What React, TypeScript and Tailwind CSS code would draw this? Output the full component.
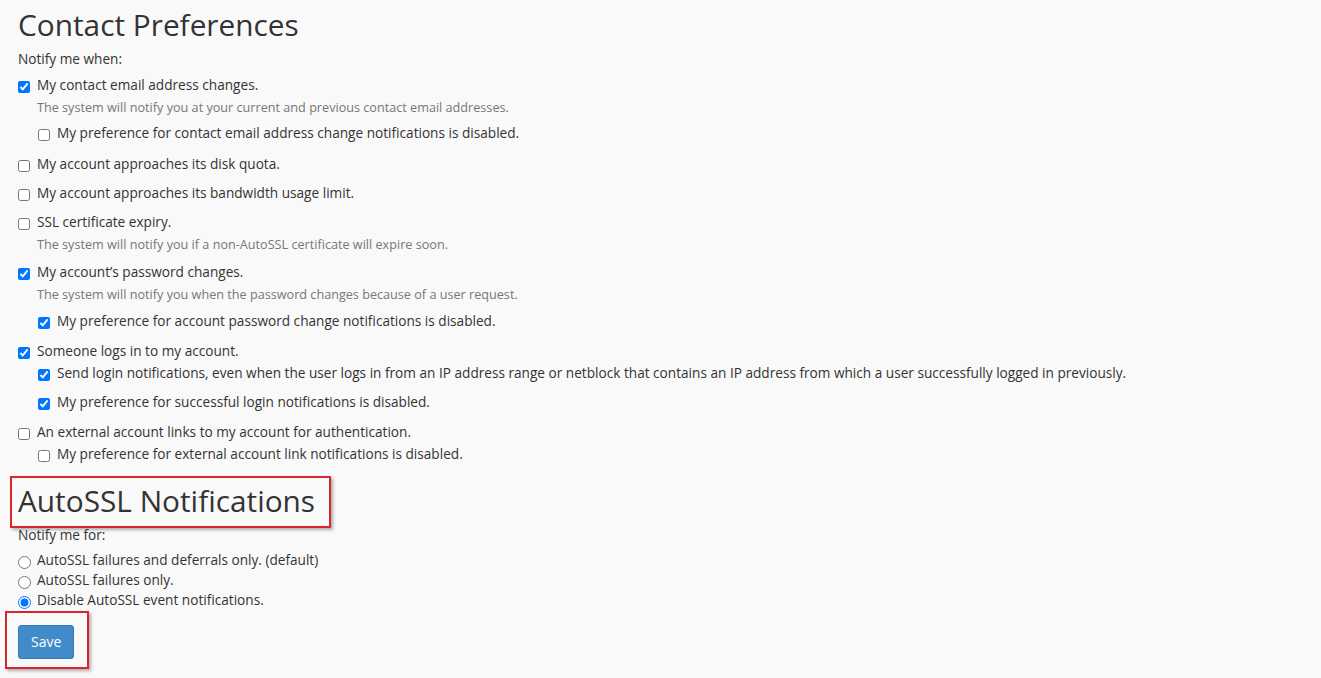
import type { ReactNode } from "react"

function Check({ checked, nested, className = "", children }: { checked?: boolean; nested?: boolean; className?: string; children: ReactNode }) {
  return (
    <label className={`flex items-start h-[20px] leading-[20px] ${nested ? "pl-[20px]" : ""} ${className}`}>
      <input
        type="checkbox"
        defaultChecked={checked}
        className="m-0 mt-[6px] mr-[7px] h-[12px] w-[12px] shrink-0"
      />
      <span className="whitespace-nowrap">{children}</span>
    </label>
  )
}

function Help({ className = "", children }: { className?: string; children: ReactNode }) {
  return <p className={`pl-[19px] text-[12.65px] leading-[20px] text-[#777] ${className}`}>{children}</p>
}

function Radio({ checked, children }: { checked?: boolean; children: ReactNode }) {
  return (
    <label className="flex items-start h-[20px] leading-[20px]">
      <input
        type="radio"
        name="autossl"
        defaultChecked={checked}
        className="m-0 mt-[6px] mr-[6px] h-[13px] w-[13px] shrink-0"
      />
      <span className="whitespace-nowrap">{children}</span>
    </label>
  )
}

export default function App() {
  return (
    <div
      className="min-h-[678px] bg-[#f9f9f9] pl-[18px] pt-[8px] text-[13.63px] text-[#333]"
      style={{ fontFamily: '"Open Sans", "Liberation Sans", sans-serif' }}
    >
      <h2 className="text-[29.8px] leading-[33px] font-normal">Contact Preferences</h2>
      <p className="mt-[8px] leading-[20px]">Notify me when:</p>

      {/* contact email */}
      <Check checked className="mt-[6px]">My contact email address changes.</Check>
      <Help className="mt-[2px]">The system will notify you at your current and previous contact email addresses.</Help>
      <Check nested className="mt-[6px]">My preference for contact email address change notifications is disabled.</Check>

      <Check className="mt-[11px]">My account approaches its disk quota.</Check>
      <Check className="mt-[9px]">My account approaches its bandwidth usage limit.</Check>

      <Check className="mt-[9px]">SSL certificate expiry.</Check>
      <Help className="mt-[2px]">The system will notify you if a non-AutoSSL certificate will expire soon.</Help>

      {/* password */}
      <Check checked className="mt-[8px]">My account’s password changes.</Check>
      <Help className="mt-[2px]">The system will notify you when the password changes because of a user request.</Help>
      <Check checked nested className="mt-[7px]">My preference for account password change notifications is disabled.</Check>

      {/* logins */}
      <Check checked className="mt-[10px]">Someone logs in to my account.</Check>
      <Check checked nested className="mt-[2px]">
        Send login notifications, even when the user logs in from an IP address range or netblock that contains an IP address from which a user successfully logged in previously.
      </Check>
      <Check checked nested className="mt-[9px]">My preference for successful login notifications is disabled.</Check>

      <Check className="mt-[10px]">An external account links to my account for authentication.</Check>
      <Check nested className="mt-[2px]">My preference for external account link notifications is disabled.</Check>

      {/* AutoSSL */}
      <div className="mt-[12px] -mb-[3px] -ml-[8px] w-[321px] border-2 border-[#d9262e] pl-[6px] pt-[6px] pb-[9px] shadow-[2px_2px_3px_rgba(0,0,0,0.3)]">
        <h2 className="text-[29.8px] leading-[33px] font-normal">AutoSSL Notifications</h2>
      </div>
      <p className="leading-[20px]">Notify me for:</p>
      <div className="mt-[5px]">
        <Radio>AutoSSL failures and deferrals only. (default)</Radio>
        <Radio>AutoSSL failures only.</Radio>
        <Radio checked>Disable AutoSSL event notifications.</Radio>
      </div>

      <div className="mt-[1px] -ml-[13px] w-[84px] border-2 border-[#d9262e] pl-[11px] pt-[12px] pb-[8px] shadow-[2px_2px_3px_rgba(0,0,0,0.3)]">
        <button className="h-[34px] rounded-[3px] border border-[#357ebd] bg-[#428bca] px-[12px] text-[14px] leading-[20px] text-white">
          Save
        </button>
      </div>
    </div>
  )
}
